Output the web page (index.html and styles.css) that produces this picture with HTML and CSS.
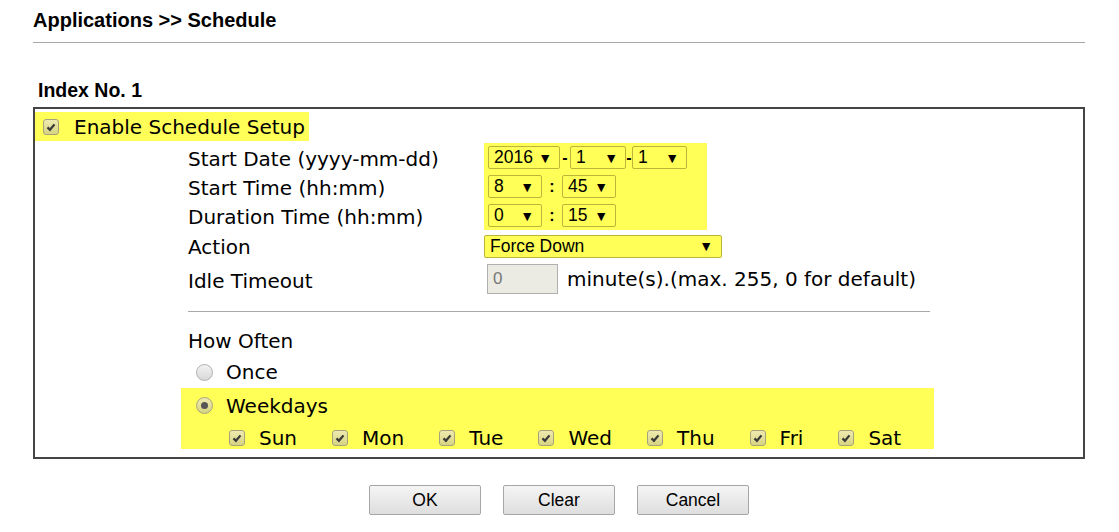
FILE: index.html
```html
<!DOCTYPE html>
<html lang="en">
<head>
    <meta charset="UTF-8">
    <title>Applications &gt;&gt; Schedule</title>
    <link rel="stylesheet" href="styles.css">
</head>
<body>
    <div class="page">
        <div class="title">Applications &gt;&gt; Schedule</div>
        <div class="index-no">Index No. 1</div>

        <div class="box">
            <div class="enable hl">
                <span class="cb"><svg viewBox="0 0 16 16"><path d="M4 8.5 L6.8 11.2 L12 5"/></svg></span>
                <span>Enable Schedule Setup</span>
            </div>

            <div class="setup">
                <div class="lbl">Start Date (yyyy-mm-dd)</div>
                <div class="lbl">Start Time (hh:mm)</div>
                <div class="lbl">Duration Time (hh:mm)</div>

                <div class="dt hl">
                    <div class="ctl">
                        <span class="sel w-year">2016<i>▼</i></span>
                        <span class="sep dash">-</span>
                        <span class="sel w-mon">1<i>▼</i></span>
                        <span class="sep dash">-</span>
                        <span class="sel w-day">1<i>▼</i></span>
                    </div>
                    <div class="ctl">
                        <span class="sel w-hr">8<i>▼</i></span>
                        <span class="sep colon">:</span>
                        <span class="sel w-hr">45<i>▼</i></span>
                    </div>
                    <div class="ctl">
                        <span class="sel w-hr">0<i>▼</i></span>
                        <span class="sep colon">:</span>
                        <span class="sel w-hr">15<i>▼</i></span>
                    </div>
                </div>

                <div class="lbl">Action</div>
                <div class="ctl"><span class="sel w-action">Force Down<i>▼</i></span></div>

                <div class="lbl">Idle Timeout</div>
                <div class="ctl idle">
                    <span class="txt">0</span>
                    <span>minute(s).(max. 255, 0 for default)</span>
                </div>
            </div>

            <div class="often">
                <hr class="rule">
                <div class="often-title">How Often</div>
                <div class="opt">
                    <span class="radio"></span>
                    <span>Once</span>
                </div>
                <div class="weekly hl">
                    <div class="opt">
                        <span class="radio on"></span>
                        <span>Weekdays</span>
                    </div>
                    <div class="days">
                        <span class="day"><span class="cb"><svg viewBox="0 0 16 16"><path d="M4 8.5 L6.8 11.2 L12 5"/></svg></span>Sun</span>
                        <span class="day"><span class="cb"><svg viewBox="0 0 16 16"><path d="M4 8.5 L6.8 11.2 L12 5"/></svg></span>Mon</span>
                        <span class="day"><span class="cb"><svg viewBox="0 0 16 16"><path d="M4 8.5 L6.8 11.2 L12 5"/></svg></span>Tue</span>
                        <span class="day"><span class="cb"><svg viewBox="0 0 16 16"><path d="M4 8.5 L6.8 11.2 L12 5"/></svg></span>Wed</span>
                        <span class="day"><span class="cb"><svg viewBox="0 0 16 16"><path d="M4 8.5 L6.8 11.2 L12 5"/></svg></span>Thu</span>
                        <span class="day"><span class="cb"><svg viewBox="0 0 16 16"><path d="M4 8.5 L6.8 11.2 L12 5"/></svg></span>Fri</span>
                        <span class="day"><span class="cb"><svg viewBox="0 0 16 16"><path d="M4 8.5 L6.8 11.2 L12 5"/></svg></span>Sat</span>
                    </div>
                </div>
            </div>
        </div>

        <div class="buttons">
            <button class="btn">OK</button>
            <button class="btn">Clear</button>
            <button class="btn">Cancel</button>
        </div>
    </div>
</body>
</html>
```

FILE: styles.css
```css
* {
    margin: 0;
    padding: 0;
    box-sizing: border-box;
}
body {
    font-family: "DejaVu Sans", Verdana, sans-serif;
    font-size: 20px;
    color: #000;
    background: #fff;
}
.page {
    width: 1052px;
    margin-left: 33px;
}
.title {
    font-family: "Liberation Sans", Arial, sans-serif;
    font-weight: bold;
    font-size: 20px;
    height: 43px;
    line-height: 40px;
    border-bottom: 1px solid #a8a8a8;
}
.index-no {
    font-family: "Liberation Sans", Arial, sans-serif;
    font-weight: bold;
    font-size: 19.5px;
    height: 24px;
    line-height: 24px;
    margin: 35px 0 5px 5px;
}
.box {
    height: 352px;
    border: 2px solid #454545;
    padding-top: 3px;
}
.hl {
    background: #ffff58;
}
.enable {
    display: flex;
    align-items: center;
    width: 274px;
    height: 29px;
    padding-left: 8px;
    gap: 15px;
}

/* checkbox / radio look */
.cb {
    display: inline-block;
    width: 16px;
    height: 16px;
    border: 1px solid #a6a37c;
    border-radius: 3px;
    background: linear-gradient(#eeeab0, #d8d482);
    flex: none;
}
.cb svg {
    display: block;
    width: 14px;
    height: 14px;
    fill: none;
    stroke: #3a3a3a;
    stroke-width: 2.6;
}
.radio {
    display: inline-block;
    width: 17px;
    height: 17px;
    border: 1px solid #b0b0b0;
    border-radius: 50%;
    background: linear-gradient(#f2f2f2, #d8d8d8);
    position: relative;
    flex: none;
}
.radio.on {
    border-color: #a6a37c;
    background: linear-gradient(#eeeab0, #d8d482);
}
.radio.on::after {
    content: "";
    position: absolute;
    left: 4px;
    top: 4px;
    width: 7px;
    height: 7px;
    border-radius: 50%;
    background: #555;
}

/* form rows */
.setup {
    display: grid;
    grid-template-columns: 296px auto;
    grid-template-rows: 29px 29px 29px 32px 36px;
    margin: 2px 0 0 153px;
}
.lbl {
    display: flex;
    align-items: center;
    padding-top: 2px;
}
.dt {
    grid-column: 2;
    grid-row: 1 / 4;
    width: 223px;
    padding-left: 4px;
    display: grid;
    grid-template-rows: 29px 29px 29px;
}
.setup .lbl:nth-child(1) { grid-row: 1; }
.setup .lbl:nth-child(2) { grid-row: 2; }
.setup .lbl:nth-child(3) { grid-row: 3; }
.ctl {
    display: flex;
    align-items: center;
}
.sel {
    display: inline-flex;
    align-items: center;
    justify-content: space-between;
    height: 23px;
    padding: 0 7px 0 5px;
    border: 1px solid #bdb43a;
    border-radius: 2px;
    background: #ffff58;
    font-family: "Liberation Sans", Arial, sans-serif;
    font-size: 17.5px;
}
.sel i {
    font-style: normal;
    font-size: 14px;
}
.w-year { width: 72px; }
.w-mon { width: 56px; }
.w-day { width: 55px; }
.w-hr { width: 54px; }
.w-action {
    width: 238px;
    padding-left: 5px;
    padding-right: 8px;
}
.sep {
    font-family: "Liberation Sans", Arial, sans-serif;
    font-weight: bold;
    text-align: center;
}
.dash {
    width: 10px;
    font-size: 16px;
}
.w-mon + .dash { width: 6px; }
.colon {
    width: 20px;
    font-size: 16px;
}
.idle {
    gap: 9px;
    margin-left: 3px;
    padding-bottom: 2px;
}
.txt {
    display: inline-flex;
    align-items: center;
    width: 71px;
    height: 30px;
    padding-left: 5px;
    background: #ebebe4;
    border: 1px solid #b0b0b0;
    color: #777;
    font-family: "Liberation Sans", Arial, sans-serif;
    font-size: 17px;
}

/* how often */
.often {
    margin-left: 146px;
}
.rule {
    border: none;
    border-top: 1px solid #a8a8a8;
    width: 742px;
    margin: 13px 0 0 7px;
}
.often-title {
    height: 30px;
    line-height: 30px;
    margin: 14px 0 0 7px;
}
.opt {
    display: flex;
    align-items: center;
    gap: 13px;
    height: 32px;
    padding-left: 15px;
}
.weekly {
    width: 753px;
    height: 61px;
}
.weekly .opt {
    height: 35px;
}
.days {
    display: flex;
    align-items: center;
    gap: 35px;
    height: 26px;
    padding: 3px 0 0 48px;
}
.day {
    display: flex;
    align-items: center;
    gap: 14px;
}

.buttons {
    display: flex;
    justify-content: center;
    gap: 22px;
    margin-top: 26px;
}
.btn {
    width: 112px;
    height: 30px;
    font-family: "Liberation Sans", Arial, sans-serif;
    font-size: 17.5px;
    color: #000;
    background: linear-gradient(#f5f5f5, #dedede);
    border: 1px solid #a6a6a6;
    border-radius: 2px;
}
```
